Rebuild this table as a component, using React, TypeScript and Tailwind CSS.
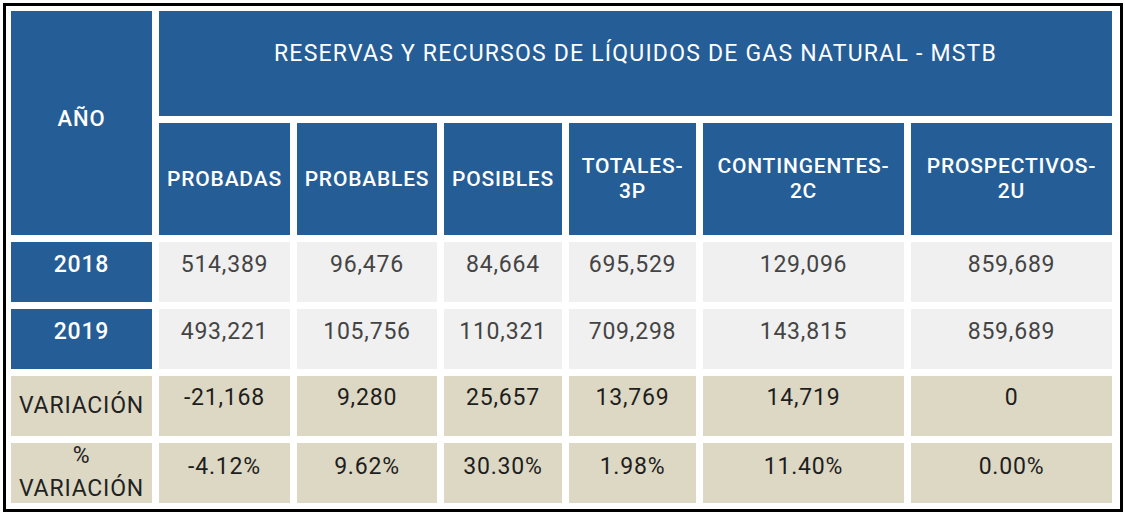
const SUB_HEADERS: string[][] = [
  ['PROBADAS'],
  ['PROBABLES'],
  ['POSIBLES'],
  ['TOTALES-', '3P'],
  ['CONTINGENTES-', '2C'],
  ['PROSPECTIVOS-', '2U'],
];

const YEARS = [
  { year: '2018', values: ['514,389', '96,476', '84,664', '695,529', '129,096', '859,689'] },
  { year: '2019', values: ['493,221', '105,756', '110,321', '709,298', '143,815', '859,689'] },
];

const VARIATION = ['-21,168', '9,280', '25,657', '13,769', '14,719', '0'];
const VARIATION_PCT = ['-4.12%', '9.62%', '30.30%', '1.98%', '11.40%', '0.00%'];

export default function App() {
  return (
    <div className="min-h-[517px] w-[1125px] bg-white pt-[3px] pl-[3px] font-['Roboto',sans-serif]">
      <div className="w-[1120px] border-[3px] border-black pt-[5px] pl-[5px] pr-[8px] pb-[6px]">
        <div className="grid grid-cols-[141px_131px_140px_118px_127px_201px_201px] grid-rows-[105px_112px_60px_60px_60px_60px] gap-[7px]">
          {/* Header */}
          <div className="row-span-2 flex items-center justify-center bg-[#255d96] pb-[10px] text-[22px] font-medium tracking-[0.8px] text-white">
            AÑO
          </div>
          <div className="col-span-6 flex items-center justify-center bg-[#255d96] pb-[19px] text-[23px] tracking-[1.2px] text-white">
            RESERVAS Y RECURSOS DE LÍQUIDOS DE GAS NATURAL - MSTB
          </div>
          {SUB_HEADERS.map((lines) => (
            <div
              key={lines.join('')}
              className="flex flex-col items-center justify-center bg-[#255d96] text-center text-[21px] font-medium leading-[25px] tracking-[0.8px] text-white"
            >
              {lines.map((l) => (
                <span key={l}>{l}</span>
              ))}
            </div>
          ))}

          {/* Year rows */}
          {YEARS.map((row) => (
            <>
              <div
                key={row.year}
                className="flex items-center justify-center bg-[#255d96] pb-[13px] text-[23px] font-medium tracking-[0.8px] text-white"
              >
                {row.year}
              </div>
              {row.values.map((v, i) => (
                <div
                  key={row.year + i}
                  className="flex items-center justify-center bg-[#f0f0f0] pb-[13px] text-[23px] tracking-[0.8px] text-[#444]"
                >
                  {v}
                </div>
              ))}
            </>
          ))}

          {/* Variation */}
          <div className="flex items-center justify-center bg-[#ddd8c4] text-[23px] tracking-[0.8px] text-[#222]">
            VARIACIÓN
          </div>
          {VARIATION.map((v, i) => (
            <div
              key={'v' + i}
              className="flex items-center justify-center bg-[#ddd8c4] pb-[15px] text-[23px] tracking-[0.8px] text-[#1e1e1e]"
            >
              {v}
            </div>
          ))}

          <div className="flex flex-col items-center bg-[#ddd8c4] text-[23px] tracking-[0.8px] text-[#222]">
            <span className="leading-[26px]">%</span>
            <span className="mt-[6px] leading-[28px]">VARIACIÓN</span>
          </div>
          {VARIATION_PCT.map((v, i) => (
            <div
              key={'p' + i}
              className="flex items-center justify-center bg-[#ddd8c4] pb-[12px] text-[23px] tracking-[0.8px] text-[#1e1e1e]"
            >
              {v}
            </div>
          ))}
        </div>
      </div>
    </div>
  );
}
